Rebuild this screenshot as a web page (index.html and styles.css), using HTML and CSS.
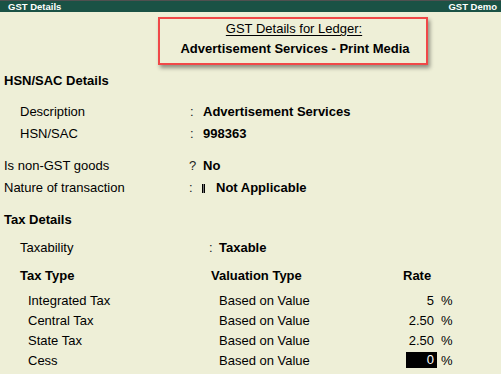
FILE: index.html
```html
<!DOCTYPE html>
<html>
<head>
<meta charset="utf-8">
<link rel="stylesheet" href="styles.css">
</head>
<body>
<div class="app">
  <div class="topbar">
    <span>GST Details</span>
    <span>GST Demo</span>
  </div>

  <div class="title-box">
    <div class="t1"><span class="ul">GST Details for Ledger:</span></div>
    <div class="t2">Advertisement Services - Print Media</div>
  </div>

  <div class="heading h-hsn">HSN/SAC Details</div>
  <div class="row r22 ind">
    <span class="lbl w170">Description</span><span class="sep w13">:</span><span class="val">Advertisement Services</span>
  </div>
  <div class="row r22 ind">
    <span class="lbl w170">HSN/SAC</span><span class="sep w13">:</span><span class="val">998363</span>
  </div>
  <div class="row r22 top-gap">
    <span class="lbl w185">Is non-GST goods</span><span class="sep w14">?</span><span class="val">No</span>
  </div>
  <div class="row r22">
    <span class="lbl w185">Nature of transaction</span><span class="sep w13">:</span><span class="val"><span class="glyph"></span>Not Applicable</span>
  </div>

  <div class="heading h-tax">Tax Details</div>
  <div class="row r22 ind taxab">
    <span class="lbl w189">Taxability</span><span class="sep w10">:</span><span class="val">Taxable</span>
  </div>

  <div class="tax-table">
    <div class="th c1">Tax Type</div>
    <div class="th c2">Valuation Type</div>
    <div class="th c3">Rate</div>
    <div class="th c4"></div>

    <div class="td c1">Integrated Tax</div>
    <div class="td c2">Based on Value</div>
    <div class="td c3"><span class="rate">5</span></div>
    <div class="td c4">%</div>

    <div class="td c1">Central Tax</div>
    <div class="td c2">Based on Value</div>
    <div class="td c3"><span class="rate">2.50</span></div>
    <div class="td c4">%</div>

    <div class="td c1">State Tax</div>
    <div class="td c2">Based on Value</div>
    <div class="td c3"><span class="rate">2.50</span></div>
    <div class="td c4">%</div>

    <div class="td c1">Cess</div>
    <div class="td c2">Based on Value</div>
    <div class="td c3"><span class="rate active">0</span></div>
    <div class="td c4">%</div>
  </div>
</div>
</body>
</html>
```

FILE: styles.css
```css
html, body {
  margin: 0;
  padding: 0;
}
body {
  background: #eeefd7;
  font-family: "Liberation Sans", Arial, sans-serif;
  font-size: 13px;
  color: #000;
  width: 501px;
  height: 374px;
  overflow: hidden;
}
.app {
  display: flex;
  flex-direction: column;
}
.topbar {
  display: flex;
  justify-content: space-between;
  height: 11px;
  line-height: 11px;
  border-top: 1px solid #505050;
  background: #1a5245;
  color: #fff;
  font-weight: bold;
  font-size: 9.5px;
  padding: 0 4px 0 8px;
}
.title-box {
  align-self: flex-start;
  margin: 5px 0 0 158px;
  width: 266px;
  height: 43px;
  border: 2px solid #f04848;
  box-shadow: 2px 3px 4px rgba(0, 0, 0, 0.4);
  display: flex;
  flex-direction: column;
  align-items: center;
  padding-top: 1px;
  box-sizing: content-box;
}
.t1 {
  line-height: 17px;
  height: 17px;
  padding-left: 2px;
}
.ul {
  text-decoration: underline;
  text-underline-offset: 2px;
}
.t2 {
  margin-top: 3px;
  line-height: 17px;
  font-weight: bold;
  padding-left: 4px;
}
.heading {
  font-weight: bold;
  line-height: 22px;
  padding-left: 4px;
}
.h-hsn {
  margin-top: 5px;
  margin-bottom: 9px;
}
.h-tax {
  margin-top: 10px;
  margin-bottom: 6px;
}
.row {
  display: flex;
  padding-left: 4px;
}
.r22 {
  line-height: 22px;
  height: 22px;
}
.row.ind {
  padding-left: 20px;
}
.top-gap {
  margin-top: 10px;
}
.w170 { width: 170px; }
.w185 { width: 185px; }
.w189 { width: 189px; }
.w13 { width: 13px; }
.w14 { width: 14px; }
.w10 { width: 10px; }
.sep {
  flex: none;
  color: #222;
}
.lbl {
  flex: none;
}
.val {
  font-weight: bold;
}
.glyph {
  display: inline-block;
  width: 1px;
  height: 9px;
  border-left: 1.5px solid #000;
  border-right: 1.5px solid #000;
  background: #777;
  margin: 0 11px 0 0;
  vertical-align: -1px;
}
.tax-table {
  margin-top: 6px;
  padding-left: 20px;
  display: grid;
  grid-template-columns: 191px 192px 34px 30px;
  grid-template-rows: 26px;
  grid-auto-rows: 20px;
  line-height: 20px;
}
.th {
  font-weight: bold;
  height: 22px;
  line-height: 22px;
  align-self: start;
}
.td.c1, .td.c2 {
  padding-left: 8px;
}
.td.c3 {
  text-align: right;
}
.rate {
  display: inline-block;
  padding-right: 3px;
}
.rate.active {
  background: #000;
  color: #fff;
  width: 28px;
  height: 16px;
  line-height: 16px;
  margin-top: 1px;
  vertical-align: top;
  box-sizing: content-box;
}
.td.c4 {
  padding-left: 4px;
}
```
